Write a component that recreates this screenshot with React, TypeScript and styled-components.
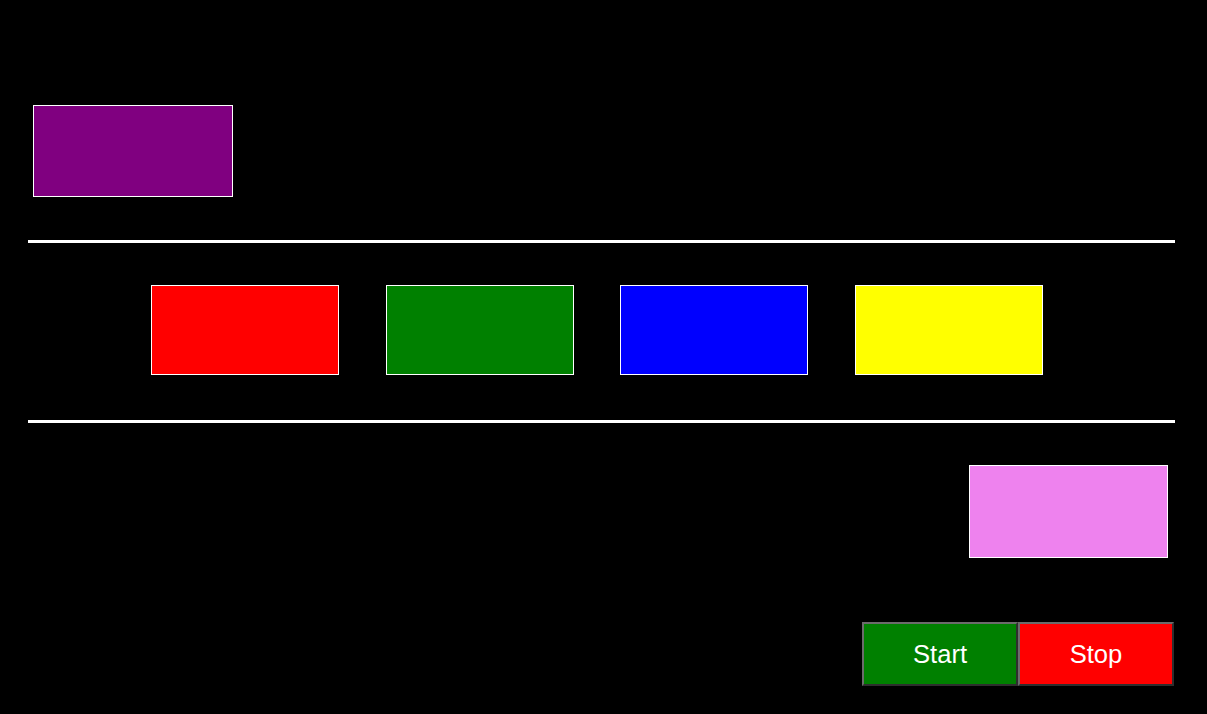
import React from "react";
import styled, { createGlobalStyle } from "styled-components";

const GlobalStyle = createGlobalStyle`
  html, body {
    margin: 0;
    padding: 0;
    background: #000;
    font-family: "Liberation Sans", Arial, sans-serif;
  }
  * { box-sizing: border-box; }
`;

const Page = styled.div`
  width: 1207px;
  height: 714px;
  background: #000;
  padding: 0 32px 0 28px;
  display: flex;
  flex-direction: column;
`;

const TopSection = styled.section`
  height: 240px;
  padding: 105px 0 0 5px;
`;

const Divider = styled.div`
  height: 3px;
  background: #fff;
  flex-shrink: 0;
`;

const MiddleSection = styled.section`
  height: 177px;
  padding: 42px 0 0 123px;
  display: flex;
  gap: 46.67px;
  align-items: flex-start;
`;

const BottomSection = styled.section`
  flex: 1;
  padding: 42px 0 28px 0;
  display: flex;
  flex-direction: column;
  align-items: flex-end;
`;

const ColorBox = styled.div<{ $color: string; $w: number; $h: number }>`
  width: ${(p) => p.$w}px;
  height: ${(p) => p.$h}px;
  background: ${(p) => p.$color};
  border: 1px solid #fff;
  flex-shrink: 0;
`;

const PinkWrap = styled.div`
  margin-right: 7px;
`;

const ButtonRow = styled.div`
  display: flex;
  margin-top: auto;
  margin-right: 1px;
`;

const ControlButton = styled.button<{ $color: string }>`
  width: 156px;
  height: 64px;
  background: ${(p) => p.$color};
  color: #fff;
  font-family: "Liberation Sans", Arial, sans-serif;
  font-size: 25.6px;
  border: 2px solid;
  border-color: #6b6b6b #2e2e2e #2e2e2e #6b6b6b;
  padding: 0;
  cursor: pointer;
`;

export default function App() {
  return (
    <>
      <GlobalStyle />
      <Page>
        <TopSection>
          <ColorBox $color="#800080" $w={200} $h={92} />
        </TopSection>
        <Divider />
        <MiddleSection>
          <ColorBox $color="#ff0000" $w={188} $h={90} />
          <ColorBox $color="#008000" $w={188} $h={90} />
          <ColorBox $color="#0000ff" $w={188} $h={90} />
          <ColorBox $color="#ffff00" $w={188} $h={90} />
        </MiddleSection>
        <Divider />
        <BottomSection>
          <PinkWrap>
            <ColorBox $color="#ee82ee" $w={199} $h={93} />
          </PinkWrap>
          <ButtonRow>
            <ControlButton $color="#008000">Start</ControlButton>
            <ControlButton $color="#ff0000">Stop</ControlButton>
          </ButtonRow>
        </BottomSection>
      </Page>
    </>
  );
}
